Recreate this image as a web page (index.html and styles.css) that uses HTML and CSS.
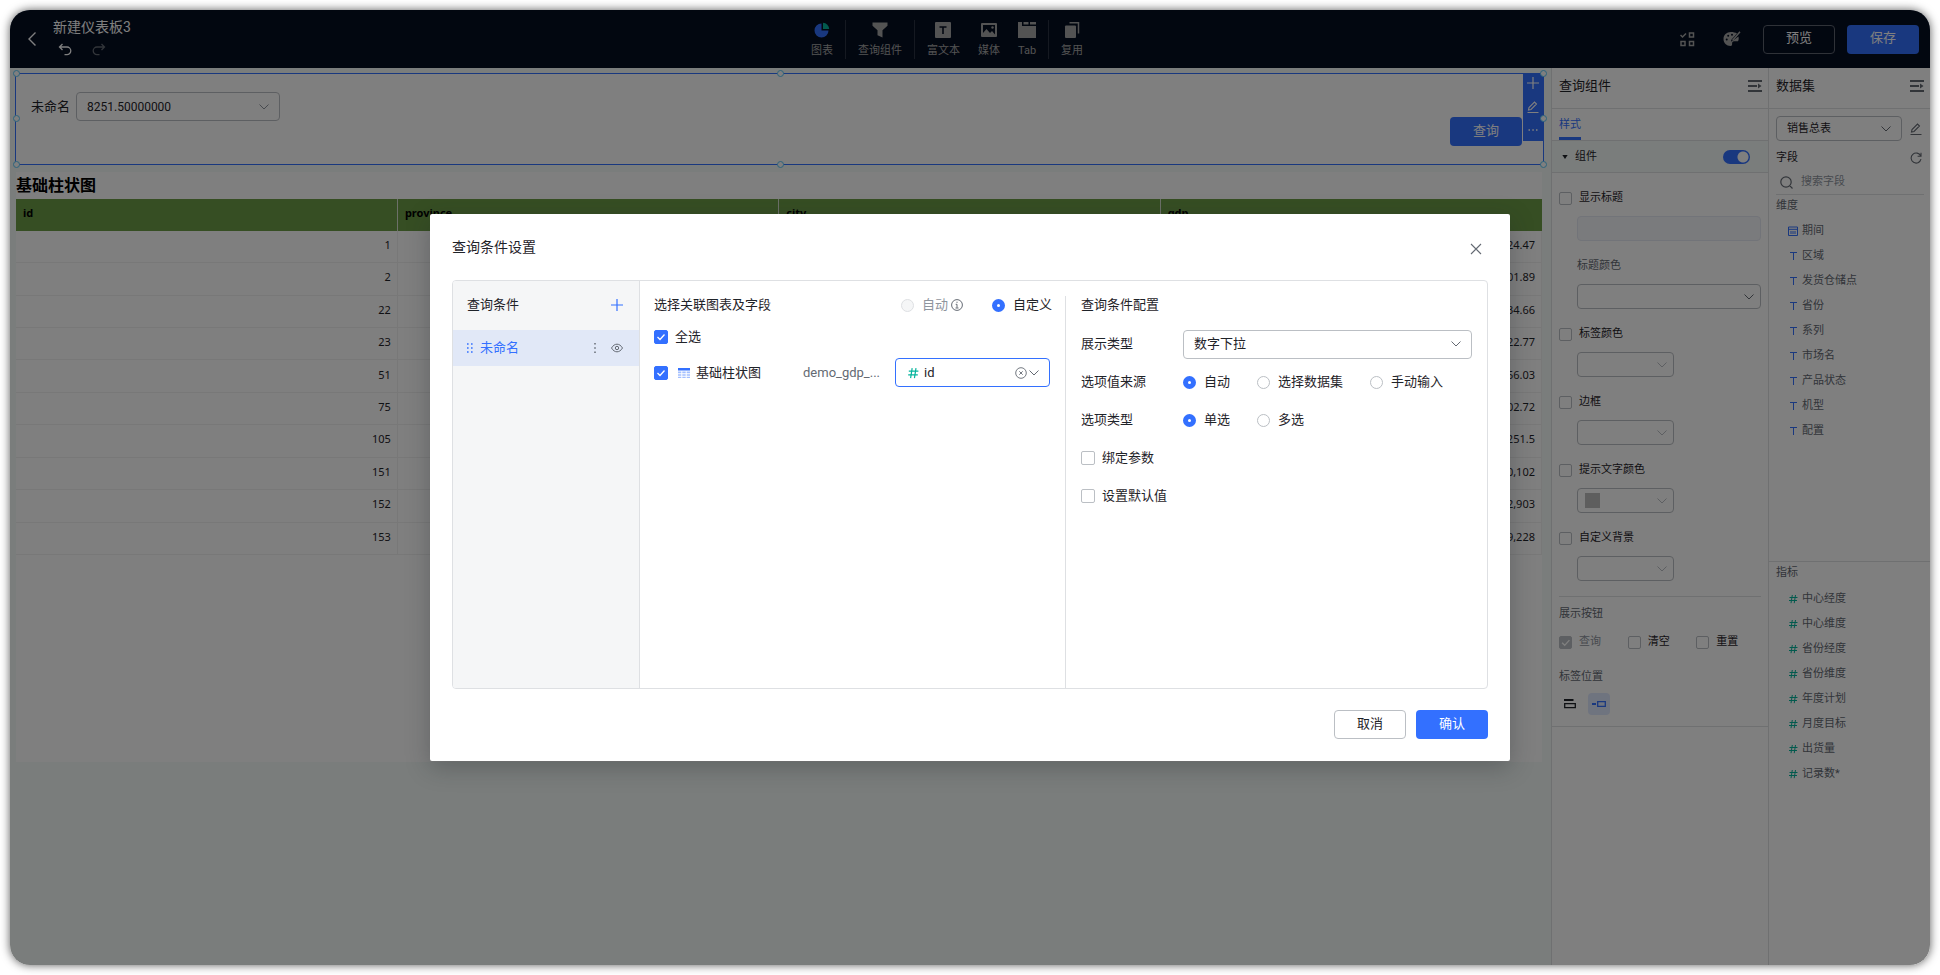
FILE: index.html
```html
<!DOCTYPE html>
<html lang="zh-CN">
<head>
<meta charset="utf-8">
<title>新建仪表板3</title>
<link rel="stylesheet" href="styles.css">
</head>
<body>
<svg class="sprite" aria-hidden="true">
  <symbol id="chevron" viewBox="0 0 12 12"><path d="M1.500 3.500 6 8l4.500-4.500" fill="none" stroke="currentColor" stroke-width="1"/></symbol>
  <symbol id="plus" viewBox="0 0 12 12"><path d="M6 0v12M0 6h12" fill="none" stroke="currentColor" stroke-width="1.200"/></symbol>
  <symbol id="pencil" viewBox="0 0 12 12"><path d="M1.500 9 2 6.500 7.500 1l2 2L4 8.500zM.5 11.500h11" fill="none" stroke="currentColor" stroke-width="1.100"/></symbol>
  <symbol id="collapse" viewBox="0 0 14 12"><path d="M0 1h14M0 6h9M0 11h14" fill="none" stroke="currentColor" stroke-width="2"/><path d="M10 3.500 13.500 6 10 8.500z" fill="currentColor"/></symbol>
  <symbol id="type-t" viewBox="0 0 10 10"><path d="M2 1.500h7M5.500 1.500V9" fill="none" stroke="currentColor" stroke-width="1"/></symbol>
  <symbol id="hash" viewBox="0 0 10 10"><path d="M1.500 3.500h8M1 6.500h8M4.300 1 3 9.200M7.500 1 6.200 9.200" fill="none" stroke="currentColor" stroke-width="1"/></symbol>
</svg>

<div class="app">
  <header class="topbar">
    <div class="topbar-left">
      <button class="icon-btn back" aria-label="返回"><svg width="10" height="16" viewBox="0 0 10 16"><path d="M8.500 1.500 2 8l6.500 6.500" fill="none" stroke="currentColor" stroke-width="1.400"/></svg></button>
      <div class="heading">
        <h1 class="board-name">新建仪表板3</h1>
        <div class="history">
          <button class="icon-btn" aria-label="撤销"><svg width="14" height="13" viewBox="0 0 14 13"><path d="M4.500 1 1.500 4l3 3M1.500 4H9a3.800 3.800 0 0 1 0 7.600H6.500" fill="none" stroke="currentColor" stroke-width="1.300"/></svg></button>
          <button class="icon-btn faded" aria-label="重做"><svg width="14" height="13" viewBox="0 0 14 13"><path d="M9.500 1l3 3-3 3M12.500 4H5a3.800 3.800 0 0 0 0 7.600h2.500" fill="none" stroke="currentColor" stroke-width="1.300"/></svg></button>
        </div>
      </div>
    </div>
    <nav class="tools">
      <div class="tool-group">
        <button class="tool"><svg width="16" height="16" viewBox="0 0 16 16"><path d="M7.500 1.500a7 7 0 1 0 7 7h-7z" fill="#3370ff"/><path d="M9 .8A6.300 6.300 0 0 1 15.200 7H9z" fill="#04b49c"/></svg><span>图表</span></button>
      </div>
      <div class="tool-group">
        <button class="tool"><svg width="16" height="16" viewBox="0 0 16 16"><path d="M.5.5h15v3.200l-5 4.600v7.200l-5-2.200V8.300l-5-4.600z" fill="currentColor"/></svg><span>查询组件</span></button>
      </div>
      <div class="tool-group">
        <button class="tool"><svg width="16" height="16" viewBox="0 0 16 16"><rect width="16" height="16" rx="1" fill="currentColor"/><path d="M4.500 5h7M8 5v7" stroke="#050e21" stroke-width="1.600"/></svg><span>富文本</span></button>
        <button class="tool"><svg width="16" height="16" viewBox="0 0 16 16"><rect y="1" width="16" height="14" rx="1" fill="currentColor"/><path d="M2 3h12v9.500l-3-3.500-2 2-3.500-4L2 11z" fill="#050e21"/><circle cx="11.500" cy="5.500" r="1.200" fill="currentColor"/></svg><span>媒体</span></button>
        <button class="tool"><svg width="18" height="16" viewBox="0 0 18 16"><path d="M0 0h4v4h14v12H0zM5.500 0h5v2.500h-5zM12 0h6v2.500h-6z" fill="currentColor"/></svg><span>Tab</span></button>
      </div>
      <div class="tool-group">
        <button class="tool"><svg width="16" height="16" viewBox="0 0 16 16"><rect x="1" y="3.500" width="11" height="12.500" rx="1" fill="currentColor"/><path d="M5.500.8h9v10.700" fill="none" stroke="currentColor" stroke-width="1.500"/></svg><span>复用</span></button>
      </div>
    </nav>
    <div class="topbar-right">
      <button class="icon-btn gray" aria-label="批量"><svg width="15" height="15" viewBox="0 0 15 15"><path d="M.5 3 2.500 5 6 1.500M9.500 1h4v4h-4zM1 9.500h4v4H1zM9.500 9.500h4v4h-4z" fill="none" stroke="currentColor" stroke-width="1.500"/></svg></button>
      <button class="icon-btn gray palette" aria-label="主题"><svg width="18" height="16" viewBox="0 0 18 16"><path d="M8 1C3.500 1 .5 4 .5 8s3 7 7 7c1.800 0 1.600-1.500 1.600-2.700 0-1.600 1.200-2 2.900-2h2.500c1.300 0 1.500-3 .9-4.800L9.500 10l-1.600.4.500-1.700L14 2.500C12.500 1.500 10 1 8 1z" fill="currentColor"/><path d="M9.500 9.500 17 .8" stroke="currentColor" stroke-width="1.500"/><circle cx="3.700" cy="8.500" r="1" fill="#050e21"/><circle cx="5.200" cy="4.800" r="1" fill="#050e21"/><circle cx="9" cy="3.800" r="1" fill="#050e21"/></svg></button>
      <button class="btn btn-ghost">预览</button>
      <button class="btn btn-primary">保存</button>
    </div>
  </header>

  <div class="workspace">
    <main class="canvas">
      <section class="query-card">
        <div class="query-field">
          <label for="q1">未命名</label>
          <div class="select-box query-select">
            <select id="q1"><option>8251.50000000</option></select>
            <svg class="chevron pale" width="12" height="12"><use href="#chevron"/></svg>
          </div>
        </div>
        <button class="btn btn-primary query-btn">查询</button>
        <div class="card-tools">
          <button class="icon-btn" aria-label="添加"><svg width="12" height="12"><use href="#plus"/></svg></button>
          <button class="icon-btn" aria-label="编辑"><svg width="12" height="12"><use href="#pencil"/></svg></button>
          <button class="icon-btn" aria-label="更多"><svg width="12" height="12" viewBox="0 0 12 12"><path d="M1.500 6h1.500M5.300 6h1.500M9 6h1.500" stroke="currentColor" stroke-width="1.400"/></svg></button>
        </div>
        <i class="handle top left"></i><i class="handle top center"></i><i class="handle top right"></i>
        <i class="handle middle left"></i><i class="handle middle right"></i>
        <i class="handle bottom left"></i><i class="handle bottom center"></i><i class="handle bottom right"></i>
      </section>

      <section class="table-card">
        <h2 class="card-title">基础柱状图</h2>
        <table class="data">
          <thead><tr><th>id</th><th>province</th><th>city</th><th>gdp</th></tr></thead>
          <tbody>
            <tr><td>1</td><td></td><td></td><td>24.47</td></tr>
            <tr><td>2</td><td></td><td></td><td>01.89</td></tr>
            <tr><td>22</td><td></td><td></td><td>34.66</td></tr>
            <tr><td>23</td><td></td><td></td><td>22.77</td></tr>
            <tr><td>51</td><td></td><td></td><td>56.03</td></tr>
            <tr><td>75</td><td></td><td></td><td>02.72</td></tr>
            <tr><td>105</td><td></td><td></td><td>8251.5</td></tr>
            <tr><td>151</td><td></td><td></td><td>0,102</td></tr>
            <tr><td>152</td><td></td><td></td><td>2,903</td></tr>
            <tr><td>153</td><td></td><td></td><td>9,228</td></tr>
          </tbody>
        </table>
      </section>
    </main>

    <aside class="panel attrs">
      <div class="panel-head"><h2>查询组件</h2><button class="icon-btn" aria-label="收起"><svg width="14" height="12"><use href="#collapse"/></svg></button></div>
      <div class="tabs"><button class="tab">样式</button></div>
      <div class="section-head">
        <svg width="6" height="4" viewBox="0 0 8 6"><path d="M0 0h8L4 6z" fill="currentColor"/></svg>
        <label for="sw">组件</label>
        <input type="checkbox" id="sw" class="switch" checked>
      </div>
      <div class="attr-list">
        <div class="attr">
          <label class="check"><input type="checkbox">显示标题</label>
          <input type="text" class="title-input" aria-label="标题" disabled>
        </div>
        <div class="attr">
          <label class="sub" for="tc">标题颜色</label>
          <div class="select-box color wide"><select id="tc"></select><svg class="chevron" width="12" height="12"><use href="#chevron"/></svg></div>
        </div>
        <div class="attr">
          <label class="check"><input type="checkbox">标签颜色</label>
          <div class="select-box color"><select aria-label="标签颜色"></select><svg class="chevron faint" width="12" height="12"><use href="#chevron"/></svg></div>
        </div>
        <div class="attr">
          <label class="check"><input type="checkbox">边框</label>
          <div class="select-box color"><select aria-label="边框"></select><svg class="chevron faint" width="12" height="12"><use href="#chevron"/></svg></div>
        </div>
        <div class="attr">
          <label class="check"><input type="checkbox">提示文字颜色</label>
          <div class="select-box color"><span class="swatch"></span><select aria-label="提示文字颜色"></select><svg class="chevron faint" width="12" height="12"><use href="#chevron"/></svg></div>
        </div>
        <div class="attr">
          <label class="check"><input type="checkbox">自定义背景</label>
          <div class="select-box color"><select aria-label="自定义背景"></select><svg class="chevron faint" width="12" height="12"><use href="#chevron"/></svg></div>
        </div>
      </div>
      <div class="attr-foot">
        <div class="foot-title">展示按钮</div>
        <div class="check-row">
          <label class="check off"><input type="checkbox" checked disabled>查询</label>
          <label class="check"><input type="checkbox">清空</label>
          <label class="check"><input type="checkbox">重置</label>
        </div>
        <div class="foot-title">标签位置</div>
        <div class="pos-row">
          <button class="pos" aria-label="上方"><svg width="12" height="10" viewBox="0 0 12 10"><path d="M0 1h9.500" stroke="currentColor" stroke-width="2"/><path d="M.7 4.700h10.600v4H.7z" fill="none" stroke="currentColor" stroke-width="1.300"/></svg></button>
          <button class="pos active" aria-label="左侧"><svg width="14" height="6" viewBox="0 0 14 6"><path d="M0 3h4" stroke="currentColor" stroke-width="2"/><path d="M5.700.7h7.600v4.600H5.700z" fill="none" stroke="currentColor" stroke-width="1.300"/></svg></button>
        </div>
      </div>
    </aside>

    <aside class="panel dataset">
      <div class="panel-head"><h2>数据集</h2><button class="icon-btn" aria-label="收起"><svg width="14" height="12"><use href="#collapse"/></svg></button></div>
      <div class="ds-tools">
        <div class="ds-row pick">
          <div class="select-box ds-select"><select aria-label="数据集"><option>销售总表</option></select><svg class="chevron" width="12" height="12"><use href="#chevron"/></svg></div>
          <button class="icon-btn" aria-label="编辑数据集"><svg width="12" height="12"><use href="#pencil"/></svg></button>
        </div>
        <div class="ds-row"><span>字段</span><button class="icon-btn" aria-label="刷新"><svg width="12" height="12" viewBox="0 0 12 12"><path d="M11 .8v3.400H7.600M10.700 4A5 5 0 1 0 11 7.200" fill="none" stroke="currentColor" stroke-width="1.100"/></svg></button></div>
        <div class="search"><svg width="13" height="13" viewBox="0 0 13 13"><path d="M6 .8a5 5 0 1 0 0 10.400A5 5 0 0 0 6 .8zM9.700 9.700l2.800 2.800" fill="none" stroke="currentColor" stroke-width="1.200"/></svg><input type="text" placeholder="搜索字段" aria-label="搜索字段"></div>
      </div>
      <div class="fields dims">
        <h3>维度</h3>
        <ul>
          <li><svg width="10" height="10" viewBox="0 0 10 10"><path d="M.5 1h9v8.500h-9zM.5 3.300h9M3 5v3M5 5v3M7 5v3" fill="none" stroke="currentColor" stroke-width="1"/></svg>期间</li>
          <li><svg width="10" height="10"><use href="#type-t"/></svg>区域</li>
          <li><svg width="10" height="10"><use href="#type-t"/></svg>发货仓储点</li>
          <li><svg width="10" height="10"><use href="#type-t"/></svg>省份</li>
          <li><svg width="10" height="10"><use href="#type-t"/></svg>系列</li>
          <li><svg width="10" height="10"><use href="#type-t"/></svg>市场名</li>
          <li><svg width="10" height="10"><use href="#type-t"/></svg>产品状态</li>
          <li><svg width="10" height="10"><use href="#type-t"/></svg>机型</li>
          <li><svg width="10" height="10"><use href="#type-t"/></svg>配置</li>
        </ul>
      </div>
      <div class="fields measures">
        <h3>指标</h3>
        <ul>
          <li><svg width="10" height="10"><use href="#hash"/></svg>中心经度</li>
          <li><svg width="10" height="10"><use href="#hash"/></svg>中心维度</li>
          <li><svg width="10" height="10"><use href="#hash"/></svg>省份经度</li>
          <li><svg width="10" height="10"><use href="#hash"/></svg>省份维度</li>
          <li><svg width="10" height="10"><use href="#hash"/></svg>年度计划</li>
          <li><svg width="10" height="10"><use href="#hash"/></svg>月度目标</li>
          <li><svg width="10" height="10"><use href="#hash"/></svg>出货量</li>
          <li><svg width="10" height="10"><use href="#hash"/></svg>记录数*</li>
        </ul>
      </div>
    </aside>
  </div>

  <div class="overlay">
    <div class="dialog" role="dialog" aria-labelledby="dlg-title">
      <div class="dialog-head">
        <h2 id="dlg-title">查询条件设置</h2>
        <button class="icon-btn" aria-label="关闭"><svg width="12" height="12" viewBox="0 0 12 12"><path d="M1 1l10 10M11 1 1 11" stroke="currentColor" stroke-width="1.100"/></svg></button>
      </div>
      <div class="dialog-body">
        <div class="cond-list">
          <div class="cond-head"><span>查询条件</span><button class="icon-btn blue" aria-label="添加条件"><svg width="12" height="12"><use href="#plus"/></svg></button></div>
          <div class="cond-item">
            <svg width="6" height="10" viewBox="0 0 6 10"><path d="M0 1h1.600M4 1h1.600M0 5h1.600M4 5h1.600M0 9h1.600M4 9h1.600" stroke="currentColor" stroke-width="1.500"/></svg>
            <span class="cond-name">未命名</span>
            <button class="icon-btn" aria-label="更多"><svg width="12" height="12" viewBox="0 0 12 12"><path d="M6 1v1.500M6 5.200v1.500M6 9.500V11" stroke="currentColor" stroke-width="1.500"/></svg></button>
            <button class="icon-btn" aria-label="显示"><svg width="12" height="12" viewBox="0 0 12 12"><path d="M.5 6C3.500.9 8.500.9 11.500 6 8.500 11.100 3.500 11.100.5 6z" fill="none" stroke="currentColor"/><circle cx="6" cy="6" r="1.700" fill="none" stroke="currentColor"/></svg></button>
          </div>
        </div>

        <div class="link-pane">
          <div class="link-head">
            <span>选择关联图表及字段</span>
            <span class="link-mode">
              <label class="radio off"><input type="radio" name="mode" disabled>自动</label>
              <svg class="info" width="12" height="12" viewBox="0 0 12 12"><circle cx="6" cy="6" r="5.400" fill="none" stroke="currentColor"/><path d="M6 2.700v1.200M4.700 5.300H6v3.400M4.500 9h3" fill="none" stroke="currentColor"/></svg>
              <label class="radio"><input type="radio" name="mode" checked>自定义</label>
            </span>
          </div>
          <label class="check all"><input type="checkbox" checked>全选</label>
          <div class="link-row">
            <label class="check chart"><input type="checkbox" checked>
              <svg width="12" height="12" viewBox="0 0 12 12"><path d="M0 1h12v2.500H0z" fill="#3370ff"/><path d="M0 4.500h3.300v1.700H0zM4.300 4.500h3.400v1.700H4.300zM8.700 4.500H12v1.700H8.700zM0 7.200h3.300v1.600H0zM4.300 7.200h3.400v1.600H4.300zM8.700 7.200H12v1.600H8.700zM0 9.800h3.300V11H0zM4.300 9.800h3.400V11H4.300zM8.700 9.800H12V11H8.700z" fill="#a3bfff"/></svg>
              <span>基础柱状图</span></label>
            <span class="source">demo_gdp_...</span>
            <div class="select-box field-select">
              <svg class="green" width="12" height="12" viewBox="0 0 10 10"><use href="#hash"/></svg>
              <select aria-label="字段"><option>id</option></select>
              <button class="icon-btn clear" aria-label="清除"><svg width="12" height="12" viewBox="0 0 12 12"><circle cx="6" cy="6" r="5.300" fill="none" stroke="currentColor" stroke-width=".9"/><path d="M4.300 4.300l3.400 3.400M7.700 4.300 4.300 7.700" stroke="currentColor" stroke-width=".9"/></svg></button>
              <svg class="chevron" width="12" height="12"><use href="#chevron"/></svg>
            </div>
          </div>
        </div>

        <div class="config-pane">
          <h3>查询条件配置</h3>
          <div class="config-row">
            <label class="config-label" for="kind">展示类型</label>
            <div class="select-box kind-select"><select id="kind"><option>数字下拉</option></select><svg class="chevron" width="12" height="12"><use href="#chevron"/></svg></div>
          </div>
          <div class="config-row">
            <span class="config-label">选项值来源</span>
            <div class="radios">
              <label class="radio"><input type="radio" name="src" checked>自动</label>
              <label class="radio"><input type="radio" name="src">选择数据集</label>
              <label class="radio"><input type="radio" name="src">手动输入</label>
            </div>
          </div>
          <div class="config-row">
            <span class="config-label">选项类型</span>
            <div class="radios">
              <label class="radio"><input type="radio" name="multi" checked>单选</label>
              <label class="radio"><input type="radio" name="multi">多选</label>
            </div>
          </div>
          <div class="config-row"><label class="check"><input type="checkbox">绑定参数</label></div>
          <div class="config-row"><label class="check"><input type="checkbox">设置默认值</label></div>
        </div>
      </div>
      <div class="dialog-foot">
        <button class="btn btn-plain">取消</button>
        <button class="btn btn-primary">确认</button>
      </div>
    </div>
  </div>
</div>
</body>
</html>
```
FILE: styles.css
```css
* { box-sizing: border-box; }

body {
  margin: 0;
  padding: 10px;
  background: #fff;
  color: #1f2329;
  font-family: Roboto, "Noto Sans CJK SC", sans-serif;
  font-size: 13px;
  line-height: 18px;
}

h1, h2, h3, ul { margin: 0; padding: 0; font-weight: 400; }
ul { list-style: none; }
svg { display: block; flex: none; }
button, input, select { font: inherit; color: inherit; }
.sprite { position: absolute; width: 0; height: 0; }

.app {
  position: relative;
  display: flex;
  flex-direction: column;
  height: calc(100vh - 20px);
  border-radius: 20px;
  overflow: hidden;
  background: #f5faf8;
}

body::before {
  content: "";
  position: absolute;
  inset: 10px;
  border-radius: 20px;
  box-shadow: 0 0 10px rgba(0, 0, 0, .65);
}

/* Buttons */
.icon-btn {
  display: flex;
  padding: 0;
  border: 0;
  background: none;
  color: #646a73;
}
.btn {
  width: 72px;
  height: 29px;
  padding: 0 0 2px;
  border: 1px solid transparent;
  border-radius: 4px;
  line-height: 18px;
}
.btn-primary { background: #3370ff; color: #fff; }
.btn-ghost { border-color: #5f6570; background: none; color: #fff; }
.btn-plain { border-color: #bbbfc4; background: #fff; }

/* Form controls */
input[type="checkbox"], input[type="radio"] {
  appearance: none;
  flex: none;
  width: 13px;
  height: 13px;
  margin: 0;
  border: 1px solid #bbbfc4;
  background: #fff;
}
input[type="checkbox"] { border-radius: 2px; }
input[type="radio"] { border-radius: 50%; }
input[type="radio"]:checked { border: 5px solid #3370ff; }
input[type="radio"]:disabled { background: #f5f6f7; border-color: #dee0e3; }
input[type="checkbox"]:checked {
  border-color: #3370ff;
  background: #3370ff url("data:image/svg+xml,%3Csvg xmlns='http://www.w3.org/2000/svg' viewBox='0 0 12 12'%3E%3Cpath d='M2.500 6l2.500 2.500 4.500-5' fill='none' stroke='white' stroke-width='1.300'/%3E%3C/svg%3E") center / 12px no-repeat;
}
input[type="checkbox"]:checked:disabled { border-color: #bbbfc4; background-color: #bbbfc4; }
.check, .radio { display: flex; align-items: center; gap: 7px; }
.radio { gap: 8px; }
.off { color: #8f959e; }

.select-box {
  position: relative;
  display: flex;
  align-items: center;
  height: 29px;
  border: 1px solid #bbbfc4;
  border-radius: 4px;
}
.select-box select {
  appearance: none;
  flex: 1;
  min-width: 0;
  height: 100%;
  padding: 0 24px 0 10px;
  border: 0;
  background: none;
}
.chevron { position: absolute; right: 9px; color: #646a73; pointer-events: none; }
.pale { color: #8f959e; }
.faint { color: #bbbfc4; }

/* Top bar */
.topbar {
  display: flex;
  align-items: center;
  flex: none;
  height: 58px;
  padding: 0 11px 0 17px;
  background: #050e21;
  color: #fff;
}
.topbar-left, .topbar-right { display: flex; align-items: center; flex: 1; }
.topbar-left { gap: 16px; }
.topbar-right { justify-content: flex-end; gap: 12px; }
.topbar-right .gray { margin-right: 16px; }
.topbar-right .palette { margin-right: 10px; }
.topbar .icon-btn { color: #fff; }
.topbar .faded { color: #646a73; }
.topbar .gray { color: #a6a6a6; }
.heading { padding-bottom: 4px; }
.board-name { font-size: 14px; line-height: 18px; }
.history { display: flex; gap: 20px; padding: 7px 0 0 5px; }
.tools { display: flex; margin-right: 52px; }
.tool-group { display: flex; gap: 18px; padding: 0 12px; }
.tool-group + .tool-group { border-left: 1px solid #2b3342; }
.tool {
  display: flex;
  flex-direction: column;
  align-items: center;
  gap: 5px;
  padding: 2px 0 0;
  border: 0;
  background: none;
  color: #a6a6a6;
  font-size: 11px;
  line-height: 16px;
}

/* Canvas */
.workspace { display: flex; flex: 1; min-height: 0; }
.canvas { flex: 1; min-width: 0; padding: 5px 7px 0 5px; }
.query-card {
  position: relative;
  display: flex;
  justify-content: space-between;
  height: 92px;
  padding: 18px 21px 18px 15px;
  border: 1px solid #3370ff;
  background: #fff;
}
.query-field { display: flex; align-items: center; align-self: flex-start; gap: 6px; }
.query-field .select-box { width: 204px; font-size: 12px; }
.query-btn { align-self: flex-end; }
.card-tools {
  position: absolute;
  top: 0;
  right: 0;
  display: flex;
  flex-direction: column;
  align-items: center;
  justify-content: space-between;
  width: 20px;
  height: 67px;
  padding: 3px 0 5px;
  background: #3370ff;
}
.card-tools .icon-btn { color: #fff; }
.handle {
  position: absolute;
  width: 7px;
  height: 7px;
  border: 1px solid #59c7f9;
  border-radius: 50%;
  background: #fff;
}
.handle.top { top: -4px; }
.handle.middle { top: 41px; }
.handle.bottom { bottom: -4px; }
.handle.left { left: -3px; }
.handle.center { left: calc(50% - 3px); }
.handle.right { right: -4px; }

.table-card { height: 590px; margin: 7px 2px 0 1px; background: #fff; }
.card-title { height: 27px; font-size: 16px; font-weight: 700; line-height: 27px; color: #000; }
.data {
  width: 100%;
  height: 356px;
  border-collapse: collapse;
  table-layout: fixed;
  font-family: "Noto Sans", sans-serif;
  font-size: 11px;
}
.data th {
  height: 32px;
  padding: 0 7px 4px;
  background: #6d9c47;
  color: #000;
  text-align: left;
}
.data th + th { border-left: 1px solid #d8e0d0; }
.data td {
  padding: 0 6px 3px;
  border: 1px solid #f0f0f0;
  border-top: 0;
  text-align: right;
}
.data td:first-child { border-left: 0; }

/* Side panels */
.panel { display: flex; flex-direction: column; flex: none; border-left: 1px solid #dee0e3; background: #fff; font-size: 11px; }
.attrs { width: 217px; }
.dataset { width: 162px; }
.panel-head {
  display: flex;
  align-items: center;
  justify-content: space-between;
  height: 41px;
  padding: 0 6px 5px 7px;
  border-bottom: 1px solid #dee0e3;
}
.panel-head h2 { font-size: 13px; }
.tabs { display: flex; height: 32px; padding-left: 7px; border-bottom: 1px solid #dee0e3; }
.tab {
  padding: 3px 0 0;
  border: 0;
  border-bottom: 3px solid #3370ff;
  background: none;
  color: #3370ff;
}
.section-head {
  display: flex;
  align-items: center;
  gap: 7px;
  height: 32px;
  padding: 0 18px 0 10px;
  border-bottom: 1px solid #dee0e3;
  background: #f5faf8;
}
.section-head input.switch:checked {
  width: 27px;
  height: 14px;
  margin-left: auto;
  border: 0;
  border-radius: 7px;
  background: #3370ff radial-gradient(circle at 20px 7px, #fff 5px, transparent 6px);
}
.attr-list { display: flex; flex-direction: column; gap: 16px; margin: 0 7px; padding: 16px 0 15px; border-bottom: 1px solid #dee0e3; }
.attr { display: flex; flex-direction: column; gap: 9px; }
.sub { margin-left: 18px; color: #646a73; }
.title-input {
  height: 25px;
  margin-left: 18px;
  border: 1px solid #e4e8f2;
  border-radius: 4px;
  background: #f5f6fb;
}
.color { width: 97px; height: 25px; margin-left: 18px; }
.color.wide { width: auto; }
.swatch { width: 15px; height: 15px; margin-left: 7px; background: #bdbdbd; }
.color .chevron { right: 5px; }
.attr-foot { padding: 8px 7px 11px; border-bottom: 1px solid #dee0e3; }
.foot-title { color: #646a73; }
.check-row { display: grid; grid-template-columns: 1fr 1fr 1fr; margin: 10px -4px 17px 0; }
.pos-row { display: flex; gap: 7px; margin-top: 7px; }
.pos { display: flex; align-items: center; justify-content: center; width: 22px; height: 22px; padding: 0; border: 0; border-radius: 4px; background: none; }
.pos.active { background: #dfe8ff; color: #3370ff; }

.ds-tools { margin: 0 6px 0 7px; border-bottom: 1px solid #dee0e3; }
.ds-row { display: flex; align-items: center; justify-content: space-between; height: 24px; padding-right: 2px; }
.pick { height: 37px; padding-top: 2px; }
.ds-select { width: 126px; height: 25px; }
.search { display: flex; align-items: center; gap: 8px; height: 24px; padding-left: 4px; color: #646a73; }
.search input { flex: 1; min-width: 0; padding: 0; border: 0; background: none; outline: 0; }
.search input::placeholder { color: #8f959e; }
.fields { min-height: 0; padding: 2px 0 0 7px; color: #646a73; overflow: hidden; }
.fields h3 { font-size: 11px; line-height: 18px; }
.fields ul { padding: 3px 0 0 12px; }
.fields li { display: flex; align-items: center; gap: 4px; height: 25px; }
.dims { flex: 10 1 0; }
.dims svg { color: #3370ff; }
.measures { flex: 11 1 0; border-top: 1px solid #dee0e3; }
.measures ul { padding-top: 4px; }
.measures svg { color: #04b49c; }

/* Dialog */
.overlay {
  position: absolute;
  inset: 0;
  display: flex;
  align-items: center;
  justify-content: center;
  background: rgba(0, 0, 0, .5);
}
.dialog {
  width: 1080px;
  max-width: 90%;
  padding: 22px;
  border-radius: 2px;
  background: #fff;
  box-shadow: 0 6px 24px rgba(31, 35, 41, .3);
}
.dialog-head { display: flex; align-items: flex-start; justify-content: space-between; height: 44px; }
.dialog-head h2 { font-size: 14px; line-height: 22px; }
.dialog-head .icon-btn { padding: 7px 6px; }
.dialog-body { display: flex; min-height: 409px; border: 1px solid #dee0e3; border-radius: 4px; overflow: hidden; }
.cond-list { width: 187px; border-right: 1px solid #dee0e3; background: #f5f6f7; }
.cond-head { display: flex; align-items: center; justify-content: space-between; height: 49px; padding: 0 16px 1px 14px; }
.blue { color: #3370ff; }
.cond-item { display: flex; align-items: center; height: 36px; padding: 0 16px 1px 14px; background: #e1e8f7; color: #3370ff; }
.cond-name { flex: 1; margin-left: 7px; }
.cond-item .icon-btn + .icon-btn { margin-left: 10px; }

.link-pane { flex: 1; min-width: 0; padding: 15px 15px 0 14px; }
.link-head { display: flex; justify-content: space-between; height: 18px; margin-right: -2px; }
.link-mode { display: flex; align-items: center; }
.info { margin: 0 29px 0 3px; color: #646a73; }
.dialog input[type="checkbox"] { width: 14px; height: 14px; }
.all { margin-top: 14px; }
.link-row { display: flex; align-items: center; margin-top: 12px; }
.chart { flex: none; width: 149px; gap: 6px; }
.chart svg { margin-left: 4px; }
.source { flex: 1; color: #646a73; }
.field-select { width: 155px; border-color: #3370ff; }
.field-select .green { margin-left: 11px; color: #04b49c; }
.field-select select { padding: 0 0 0 5px; }
.clear { margin-right: 22px; }

.config-pane { width: 422px; margin-top: 15px; padding: 0 15px; border-left: 1px solid #dee0e3; }
.config-pane h3 { font-size: 13px; line-height: 18px; }
.config-row { display: flex; align-items: center; height: 38px; }
.config-pane h3 + .config-row { margin-top: 11px; }
.config-label { width: 102px; flex: none; }
.kind-select { flex: 1; }
.radios { display: flex; gap: 27px; }

.dialog-foot { display: flex; justify-content: flex-end; gap: 10px; margin-top: 21px; }
```
